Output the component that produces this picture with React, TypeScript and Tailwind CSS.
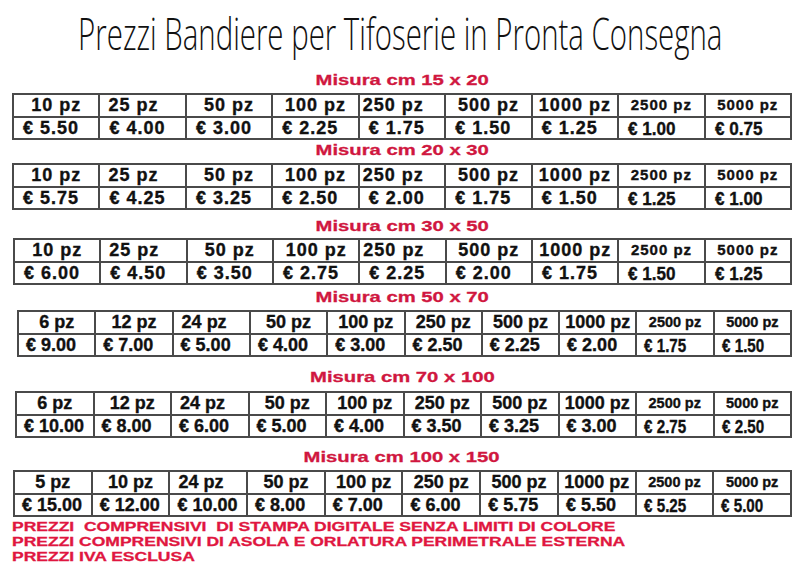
import React from "react";

type Listino = {
  misura: string;
  qty: string[];
  prezzi: string[];
  ml: string;
  w: string;
  labelMt: string;
  tableMt: string;
};

const listini: Listino[] = [
  {
    misura: "Misura cm 15 x 20",
    qty: ["10", "25", "50", "100", "250", "500", "1000", "2500", "5000"],
    prezzi: ["5.50", "4.00", "3.00", "2.25", "1.75", "1.50", "1.25", "1.00", "0.75"],
    ml: "ml-[12px]",
    w: "w-[780px]",
    labelMt: "mt-[17px]",
    tableMt: "mt-[5px]",
  },
  {
    misura: "Misura cm 20 x 30",
    qty: ["10", "25", "50", "100", "250", "500", "1000", "2500", "5000"],
    prezzi: ["5.75", "4.25", "3.25", "2.50", "2.00", "1.75", "1.50", "1.25", "1.00"],
    ml: "ml-[12px]",
    w: "w-[780px]",
    labelMt: "mt-[2px]",
    tableMt: "mt-[5px]",
  },
  {
    misura: "Misura cm 30 x 50",
    qty: ["10", "25", "50", "100", "250", "500", "1000", "2500", "5000"],
    prezzi: ["6.00", "4.50", "3.50", "2.75", "2.25", "2.00", "1.75", "1.50", "1.25"],
    ml: "ml-[13px]",
    w: "w-[779px]",
    labelMt: "mt-[8px]",
    tableMt: "mt-[4px]",
  },
  {
    misura: "Misura cm 50 x 70",
    qty: ["6", "12", "24", "50", "100", "250", "500", "1000", "2500", "5000"],
    prezzi: ["9.00", "7.00", "5.00", "4.00", "3.00", "2.50", "2.25", "2.00", "1.75", "1.50"],
    ml: "ml-[17px]",
    w: "w-[775px]",
    labelMt: "mt-[4px]",
    tableMt: "mt-[5px]",
  },
  {
    misura: "Misura cm 70 x 100",
    qty: ["6", "12", "24", "50", "100", "250", "500", "1000", "2500", "5000"],
    prezzi: ["10.00", "8.00", "6.00", "5.00", "4.00", "3.50", "3.25", "3.00", "2.75", "2.50"],
    ml: "ml-[15px]",
    w: "w-[777px]",
    labelMt: "mt-[12px]",
    tableMt: "mt-[6px]",
  },
  {
    misura: "Misura cm 100 x 150",
    qty: ["5", "10", "24", "50", "100", "250", "500", "1000", "2500", "5000"],
    prezzi: ["15.00", "12.00", "10.00", "8.00", "7.00", "6.00", "5.75", "5.50", "5.25", "5.00"],
    ml: "ml-[13px]",
    w: "w-[779px]",
    labelMt: "mt-[11px]",
    tableMt: "mt-[5px]",
  },
];

const bordo = "border-r-2 border-b-2 border-[#4a4a4a]";

function Tabella({ l }: { l: Listino }) {
  const nove = l.qty.length === 9;
  return (
    <div
      className={`${l.ml} ${l.w} ${l.tableMt} grid ${
        nove ? "grid-cols-9" : "grid-cols-10"
      } border-l-2 border-t-2 border-[#4a4a4a] bg-white font-bold text-[#111] [-webkit-text-stroke:0.35px_#111]`}
    >
      {l.qty.map((q, i) => {
        const piccolo = i >= l.qty.length - 2;
        const sinistra = nove ? i === 1 || i === 4 : i === 2;
        let size = nove ? "text-[18px] tracking-[1px]" : "text-[18px]";
        if (piccolo) size = nove ? "text-[15px] tracking-[1px]" : "text-[14.5px]";
        return (
          <div
            key={"q" + i}
            className={`${bordo} h-[23px] flex items-center whitespace-nowrap overflow-hidden ${size} ${
              sinistra ? (i === 4 ? "justify-start pl-[3px]" : "justify-start pl-[8px]") : "justify-center"
            }`}
          >
            {q} pz
          </div>
        );
      })}
      {l.prezzi.map((p, i) => {
        const stretto = i >= l.prezzi.length - 2;
        return (
          <div
            key={"p" + i}
            className={`${bordo} h-[22px] flex items-center whitespace-nowrap overflow-hidden ${
              nove ? "pl-[9px]" : "pl-[7px]"
            }`}
          >
            {stretto ? (
              <span
                className={`inline-block origin-left pt-[3px] text-[19px] ${
                  nove ? "scale-x-[0.9]" : "scale-x-[0.8]"
                }`}
              >
                € {p}
              </span>
            ) : (
              <span className={nove ? "text-[18px] tracking-[1px]" : "text-[18px]"}>€ {p}</span>
            )}
          </div>
        );
      })}
    </div>
  );
}

export default function App() {
  return (
    <div className="w-[800px] h-[576px] overflow-hidden bg-white font-['Liberation_Sans',Arial,sans-serif]">
      <div className="h-[55px] pt-[11px] flex justify-center">
        <span className="inline-block whitespace-nowrap scale-x-[0.668] font-['Open_Sans',sans-serif] font-light text-[44px] leading-[44px] text-[#111]">
          Prezzi Bandiere per Tifoserie in Pronta Consegna
        </span>
      </div>

      {listini.map((l) => (
        <div key={l.misura}>
          <div className={`${l.labelMt} h-[16px] flex justify-center pl-[4px]`}>
            <span className="inline-block whitespace-nowrap scale-x-[1.35] text-[15px] leading-[16px] font-bold text-[#d0173f] [-webkit-text-stroke:0.3px_#d0173f]">
              {l.misura}
            </span>
          </div>
          <Tabella l={l} />
        </div>
      ))}

      <div className="mt-[3px] pl-[12px] text-[12.5px] leading-[15px] font-bold text-[#e0163f] [-webkit-text-stroke:0.3px_#e0163f]">
        <div className="origin-left scale-x-[1.4] whitespace-pre">
          PREZZI  COMPRENSIVI  DI STAMPA DIGITALE SENZA LIMITI DI COLORE
        </div>
        <div className="origin-left scale-x-[1.4] whitespace-pre">
          PREZZI COMPRENSIVI DI ASOLA E ORLATURA PERIMETRALE ESTERNA
        </div>
        <div className="origin-left scale-x-[1.4] whitespace-pre">PREZZI IVA ESCLUSA</div>
      </div>
    </div>
  );
}
